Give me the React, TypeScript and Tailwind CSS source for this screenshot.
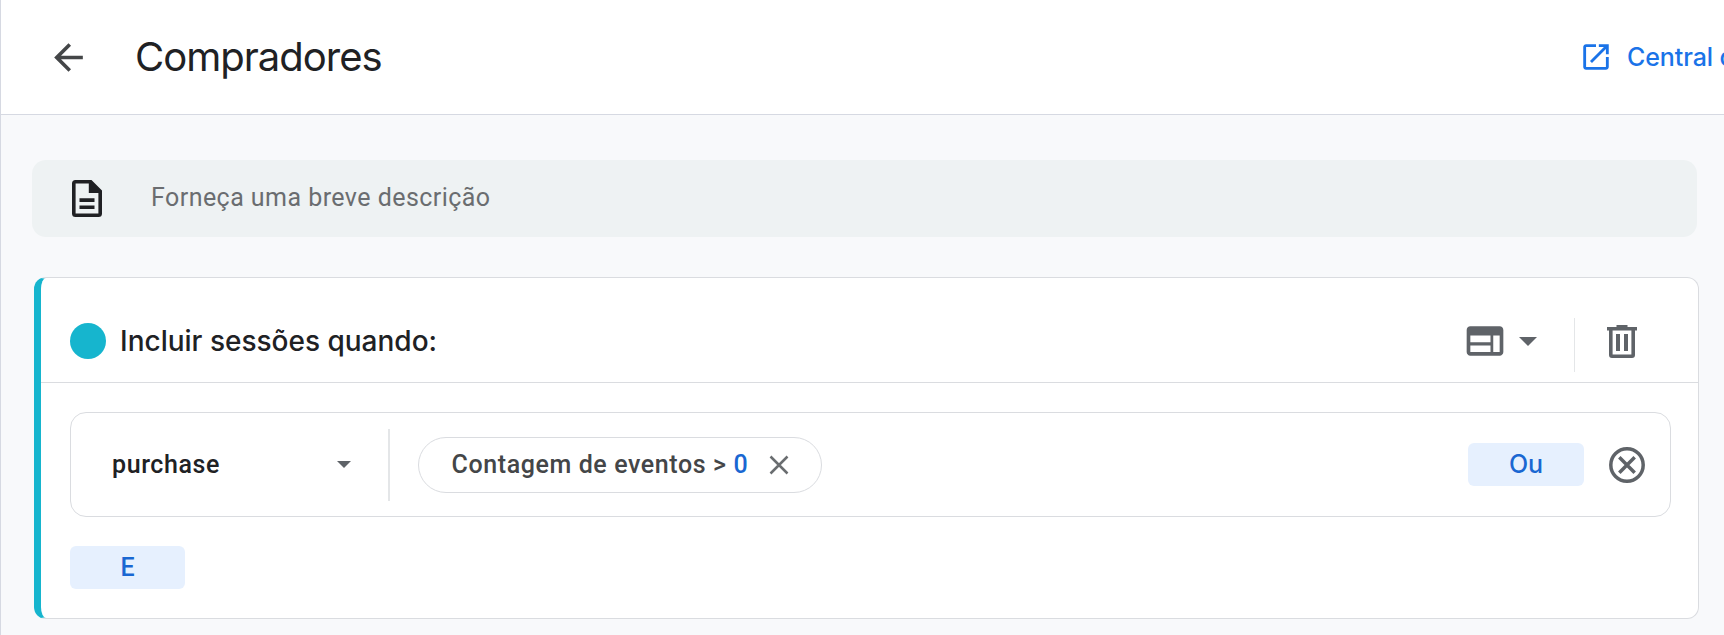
import type { ReactNode } from "react";

interface IconProps {
  className?: string;
  path: string;
}

function Icon({ className, path }: IconProps) {
  return (
    <svg viewBox="0 0 24 24" fill="currentColor" className={className}>
      <path d={path} />
    </svg>
  );
}

const ARROW_BACK =
  "M20 11H7.83l5.59-5.59L12 4l-8 8 8 8 1.41-1.41L7.83 13H20v-2z";
const OPEN_IN_NEW =
  "M19 19H5V5h7V3H5c-1.11 0-2 .9-2 2v14c0 1.1.89 2 2 2h14c1.1 0 2-.9 2-2v-7h-2v7zM14 3v2h3.59l-9.83 9.83 1.41 1.41L19 6.41V10h2V3h-7z";
const WEB =
  "M20 4H4c-1.1 0-1.99.9-1.99 2L2 18c0 1.1.9 2 2 2h16c1.1 0 2-.9 2-2V6c0-1.1-.9-2-2-2zm-5 14H4v-3.500h11V18zm0-5.300H4V9h11v3.700zm5 5.300h-3.500V9H20v9z";

interface ActionButtonProps {
  children: ReactNode;
  className?: string;
}

function ActionButton({ children, className }: ActionButtonProps) {
  return (
    <button
      className={`flex h-[43px] items-center justify-center rounded-[6px] bg-[#e6f0fe] font-medium text-[#1967d2] ${className}`}
    >
      {children}
    </button>
  );
}

function Header() {
  return (
    <header className="flex h-[115px] items-center overflow-hidden border-b border-[#d6d9e2] bg-white">
      <Icon
        className="ml-[46px] size-[43px] shrink-0 text-[#444648]"
        path={ARROW_BACK}
      />
      <h1 className="ml-[45px] font-[Inter] text-[40px] leading-[48px] tracking-[-1px] text-[#202124]">
        Compradores
      </h1>
      <a className="ml-auto flex w-[145px] shrink-0 items-center text-[#1a73e8]">
        <Icon className="size-[34px] shrink-0" path={OPEN_IN_NEW} />
        <span className="ml-[14px] font-[Inter] text-[25px] leading-[30px] font-medium tracking-[-0.1px] whitespace-nowrap">
          Central de públicos
        </span>
      </a>
    </header>
  );
}

function Description() {
  return (
    <div className="ml-[31px] flex h-[77px] w-[1665px] items-center rounded-[14px] bg-[#eef2f3]">
      <svg
        viewBox="0 0 30 37"
        className="mb-px ml-[39.500px] h-[37px] w-[30px] text-[#202124]"
      >
        <path
          fill="currentColor"
          fillRule="evenodd"
          d="M3.5 0H19.5L30 10.5V33.5Q30 37 26.500 37H3.500Q0 37 0 33.500V3.500Q0 0 3.500 0ZM3.600 3.600V33.400H26.400V13H16.800V3.600Z"
        />
        <path fill="currentColor" d="M7.500 18.300h15v3.600h-15zM7.500 25.500h15v3.600h-15z" />
      </svg>
      <span className="mb-px ml-[49.500px] text-[25px] leading-[30px] tracking-[0.45px] text-[#6a6d70]">
        Forneça uma breve descrição
      </span>
    </div>
  );
}

function ConditionRow() {
  return (
    <div className="flex h-[105px] items-center rounded-[16px] border border-[#dadce0]">
      <div className="flex w-[317px] items-center justify-between pr-[37px] pl-[41px]">
        <span className="text-[25px] leading-[30px] font-medium tracking-[0.6px] text-[#202124]">
          purchase
        </span>
        <svg viewBox="0 0 14 7" className="h-[7px] w-[14px] fill-[#5f6368]">
          <path d="M0 0h14l-7 7z" />
        </svg>
      </div>
      <div className="h-[72px] w-[1.500px] bg-[#e4e6e8]" />
      <div className="ml-[28px] flex h-[56px] w-[404px] items-center rounded-full border border-[#dadce0] pl-[33px]">
        <span className="w-[297px] text-[25px] leading-[30px] font-medium tracking-[0.6px] whitespace-nowrap text-[#444648]">
          Contagem de eventos &gt; <span className="text-[#1967d2]">0</span>
        </span>
        <svg
          viewBox="0 0 20 20"
          className="ml-[20px] size-[20px] shrink-0 stroke-[#6a6d70] stroke-[2.500]"
        >
          <path d="M1.500 1.500l17 17M18.500 1.500l-17 17" />
        </svg>
      </div>
      <ActionButton className="ml-auto w-[116px] font-[Inter] text-[25px]">
        Ou
      </ActionButton>
      <svg
        viewBox="0 0 36 36"
        className="mr-[25px] ml-[25px] size-[36px] fill-none stroke-[#5f6368] stroke-[3.500]"
      >
        <circle cx="18" cy="18" r="16.200" />
        <path d="M10.300 10.300l15.400 15.400M25.700 10.300l-15.400 15.400" />
      </svg>
    </div>
  );
}

function ConditionGroup() {
  return (
    <section className="mt-[40px] ml-[33px] h-[342px] w-[1665px] rounded-[12px] border border-l-[7px] border-[#dadce0] border-l-[#16b5ce] bg-white">
      <div className="flex h-[105px] items-end border-b border-[#dadce0] pb-[10px] pl-[29px]">
        <div className="mb-[13px] size-[36px] rounded-full bg-[#16b5ce]" />
        <h2 className="mb-[13px] ml-[14px] font-[Inter] text-[28px] leading-[36px] font-medium tracking-normal whitespace-nowrap text-[#202124]">
          Incluir sessões quando:
        </h2>
        <div className="mr-[61px] ml-auto flex h-[54px] items-center">
          <Icon className="mb-2 size-[44px] text-[#5f6368]" path={WEB} />
          <svg
            viewBox="0 0 18 9"
            className="mb-2 ml-[12px] h-[9px] w-[18px] fill-[#5f6368]"
          >
            <path d="M0 0h18l-9 9z" />
          </svg>
          <div className="ml-[37px] h-[54px] w-[1.500px] bg-[#e4e6e8]" />
          <svg
            viewBox="0 0 30 33"
            className="mb-2 ml-[32px] h-[33px] w-[30px] fill-[#5f6368]"
          >
            <path
              fillRule="evenodd"
              d="M9.500 0h11v2H30v3.600h-2V30q0 3-3 3H5q-3 0-3-3V5.600H0V2h9.500zM5.600 5.600v23.800h18.800V5.600z"
            />
            <path d="M9 9h4v17H9zM17 9h4v17h-4z" />
          </svg>
        </div>
      </div>
      <div className="mt-[29px] pr-[27px] pl-[29px]">
        <ConditionRow />
        <ActionButton className="mt-[29px] w-[115px] text-[25px]">E</ActionButton>
      </div>
    </section>
  );
}

export default function App() {
  return (
    <div className="h-[635px] w-[1724px] overflow-hidden border-l border-[#d6d9e2] bg-[#f8f9fb] font-[Roboto]">
      <Header />
      <main className="pt-[45px]">
        <Description />
        <ConditionGroup />
      </main>
    </div>
  );
}
